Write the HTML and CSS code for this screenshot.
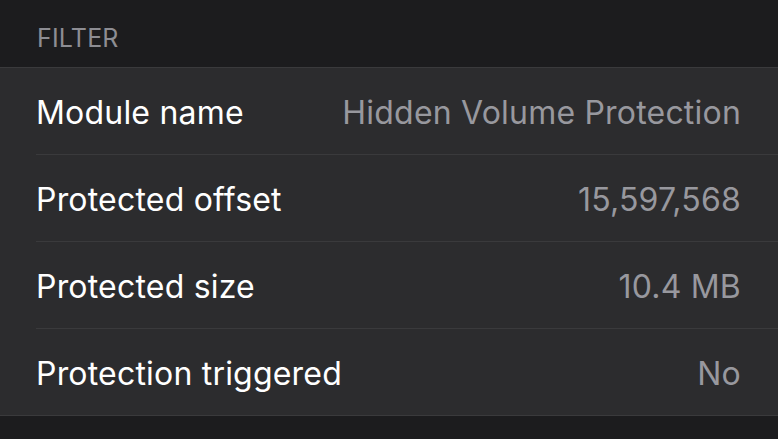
FILE: index.html
```html
<!DOCTYPE html>
<html>
<head>
<meta charset="utf-8">
<link rel="stylesheet" href="styles.css">
</head>
<body>
<div class="page">
  <div class="header">FILTER</div>
  <div class="group">
    <div class="row"><span class="label">Module name</span><span class="value">Hidden Volume Protection</span></div>
    <div class="row"><span class="label">Protected offset</span><span class="value">15,597,568</span></div>
    <div class="row"><span class="label">Protected size</span><span class="value">10.4 MB</span></div>
    <div class="row"><span class="label">Protection triggered</span><span class="value">No</span></div>
  </div>
</div>
</body>
</html>
```
FILE: styles.css
```css
html, body {
  margin: 0;
  padding: 0;
  background: #1c1c1e;
  width: 778px;
  height: 439px;
  overflow: hidden;
}
.page {
  font-family: Inter, "Noto Sans", sans-serif;
  -webkit-font-smoothing: antialiased;
}
.header {
  height: 67px;
  box-sizing: border-box;
  padding: 23px 0 0 37px;
  color: #8d8d93;
  font-size: 25px;
  line-height: 30px;
  letter-spacing: 0.2px;
}
.group {
  background: #2c2c2e;
  border-top: 1px solid #3a3a3c;
  border-bottom: 1px solid #3a3a3c;
}
.row {
  margin-left: 36px;
  padding-right: 37px;
  padding-top: 2px;
  box-sizing: border-box;
  height: 87px;
  display: flex;
  align-items: center;
  justify-content: space-between;
  border-bottom: 1px solid #3a3a3c;
  font-size: 32px;
  letter-spacing: 0.2px;
}
.row:last-child {
  border-bottom: none;
  height: 86px;
}
.label {
  color: #ffffff;
}
.value {
  color: #98989e;
}
```
